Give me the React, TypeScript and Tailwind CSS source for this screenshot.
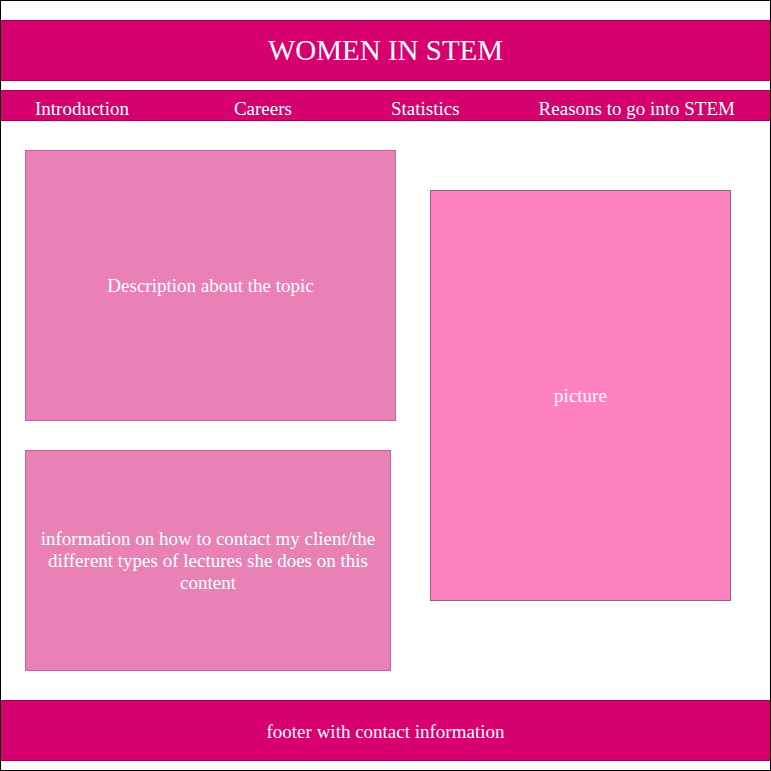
export default function App() {
  const serif = { fontFamily: '"Liberation Serif", "Times New Roman", serif' }
  const nav = ['Introduction', 'Careers', 'Statistics', 'Reasons to go into STEM']

  return (
    <div className="w-[771px] h-[771px] bg-white border border-black text-white" style={serif}>
      <header className="mt-[19px] h-[61px] bg-[#d6006f] border-y border-[#9e0052] flex items-center justify-center">
        <h1 className="text-[29px] leading-none">WOMEN IN STEM</h1>
      </header>

      <nav className="mt-[9px] h-[31px] bg-[#d6006f] border-y border-[#9e0052] flex items-start pt-[4px] pl-[34px] text-[19px]">
        <span>{nav[0]}</span>
        <span className="ml-[105px]">{nav[1]}</span>
        <span className="ml-[99px]">{nav[2]}</span>
        <span className="ml-[79px]">{nav[3]}</span>
      </nav>

      <main className="flex pl-[24px]">
        <div className="flex flex-col">
          <div className="mt-[29px] w-[371px] h-[271px] pt-[2px] bg-[#e980b6] border border-[#c0679a] flex items-center justify-center text-[19px]">
            Description about the topic
          </div>
          <div className="mt-[29px] w-[366px] h-[221px] bg-[#e980b6] border border-[#c0679a] flex items-center justify-center text-center text-[19px] leading-[22px] px-3">
            information on how to contact my client/the different types of lectures she does on this content
          </div>
        </div>
        <div className="ml-[34px] mt-[69px] w-[301px] h-[411px] pt-[2px] bg-[#ff82c0] border border-[#9a5c82] flex items-center justify-center text-[19px]">
          picture
        </div>
      </main>

      <footer className="mt-[29px] h-[61px] pt-[3px] bg-[#d6006f] border-y border-[#9e0052] flex items-center justify-center text-[19px]">
        footer with contact information
      </footer>
    </div>
  )
}
